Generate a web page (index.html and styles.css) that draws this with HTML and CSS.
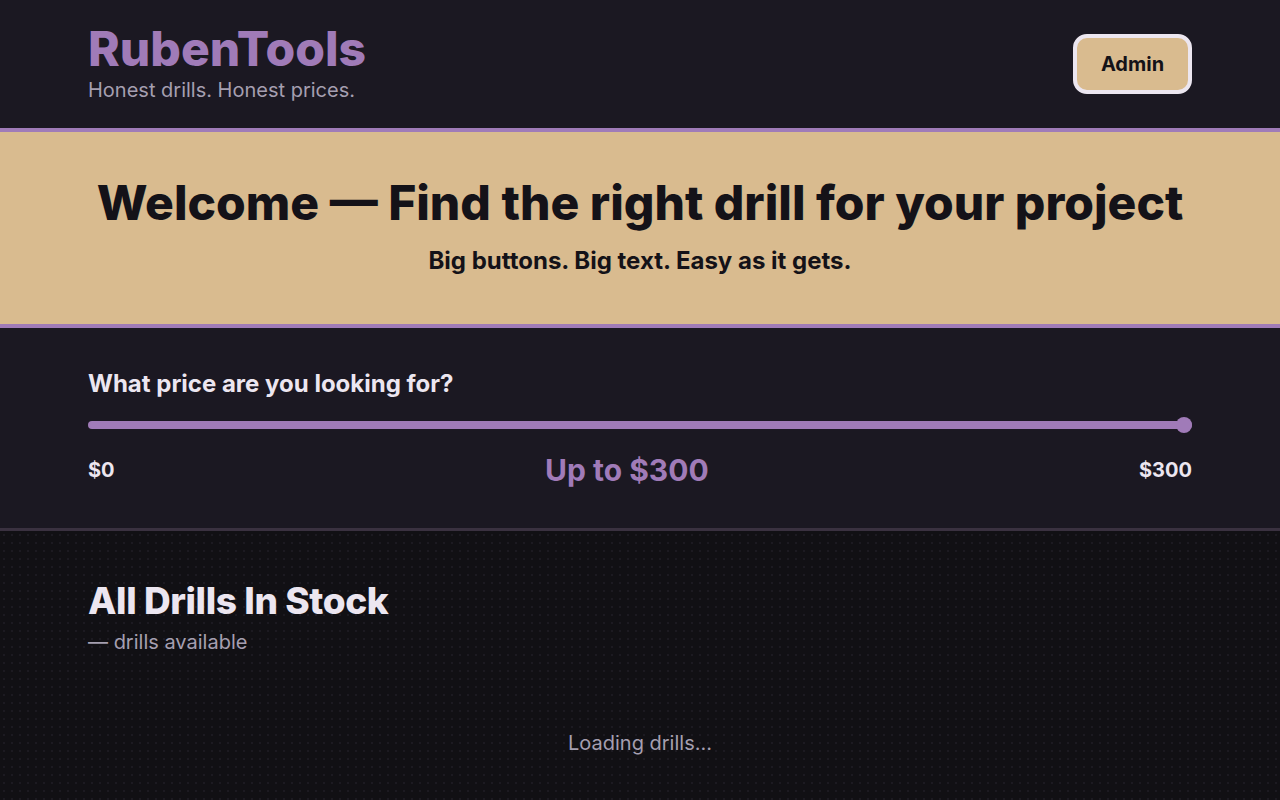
FILE: index.html
```html
<!DOCTYPE html>
<html lang="en">
<head>
    <meta charset="UTF-8">
    <meta name="viewport" content="width=device-width, initial-scale=1.0">
    <title>RubenTools</title>
    <link rel="stylesheet" href="styles.css">
</head>
<body>
    <header class="site-header">
        <div class="container header-inner">
            <div class="brand">
                <h1 class="brand-name">RubenTools</h1>
                <p class="brand-tagline">Honest drills. Honest prices.</p>
            </div>
            <button class="admin-btn">Admin</button>
        </div>
    </header>

    <section class="hero">
        <div class="container">
            <h2 class="hero-title">Welcome — Find the right drill for your project</h2>
            <p class="hero-sub">Big buttons. Big text. Easy as it gets.</p>
        </div>
    </section>

    <section class="price-filter">
        <div class="container">
            <label class="price-label" for="price">What price are you looking for?</label>
            <input type="range" id="price" class="price-range" min="0" max="300" value="300">
            <div class="price-row">
                <span class="price-end">$0</span>
                <span class="price-current">Up to $300</span>
                <span class="price-end">$300</span>
            </div>
        </div>
    </section>

    <main class="drills">
        <div class="container">
            <h2 class="drills-title">All Drills In Stock</h2>
            <p class="drills-count">— drills available</p>
            <p class="drills-loading">Loading drills...</p>
        </div>
    </main>
</body>
</html>
```

FILE: styles.css
```css
* {
    box-sizing: border-box;
}
html, body {
    margin: 0;
    padding: 0;
}
body {
    font-family: Inter, "Noto Sans", sans-serif;
    background-color: #111014;
    color: #ece6f0;
    min-height: 800px;
}
.container {
    max-width: 1104px;
    margin: 0 auto;
}

/* header */
.site-header {
    background-color: #1b1822;
    border-bottom: 4px solid #a07bb8;
}
.header-inner {
    display: flex;
    justify-content: space-between;
    align-items: center;
    height: 128px;
}
.brand {
    margin-top: -3px;
}
.brand-name {
    margin: 0;
    font-size: 48px;
    font-weight: 800;
    line-height: 1.1;
    color: #a07bb8;
}
.brand-tagline {
    margin: 3px 0 0;
    font-size: 20px;
    color: #a59fb0;
}
.admin-btn {
    font-family: inherit;
    background-color: #d9bb8f;
    color: #141218;
    border: 4px solid #ece6f0;
    border-radius: 14px;
    width: 119px;
    height: 60px;
    font-size: 20px;
    font-weight: 700;
    cursor: pointer;
}

/* hero */
.hero {
    background-color: #d9bb8f;
    border-bottom: 4px solid #a07bb8;
    text-align: center;
    color: #141218;
    height: 196px;
    padding-top: 42px;
}
.hero-title {
    margin: 0;
    font-size: 48px;
    font-weight: 800;
    line-height: 1.2;
}
.hero-sub {
    margin: 14px 0 0;
    font-size: 24px;
    font-weight: 700;
}

/* price filter */
.price-filter {
    background-color: #1b1822;
    border-bottom: 3px solid #3a3140;
    height: 203px;
    padding-top: 41px;
}
.price-label {
    display: block;
    font-size: 24px;
    font-weight: 700;
    color: #ece6f0;
}
.price-range {
    -webkit-appearance: none;
    appearance: none;
    display: block;
    width: 100%;
    height: 8px;
    margin: 23px 0 0;
    background: #a07bb8;
    border-radius: 4px;
    outline: none;
}
.price-range::-webkit-slider-thumb {
    -webkit-appearance: none;
    appearance: none;
    width: 16px;
    height: 16px;
    border-radius: 50%;
    background: #a07bb8;
    cursor: pointer;
}
.price-row {
    display: flex;
    justify-content: space-between;
    align-items: center;
    margin-top: 23px;
}
.price-end {
    font-size: 20px;
    font-weight: 700;
    color: #ece6f0;
}
.price-current {
    font-size: 30px;
    font-weight: 700;
    color: #a07bb8;
}

/* drills list */
.drills {
    background-color: #111014;
    background-image: radial-gradient(circle, #1c1a21 1px, transparent 1.2px);
    background-size: 8px 8px;
    min-height: 269px;
    padding-top: 48px;
}
.drills-title {
    margin: 0;
    font-size: 37px;
    font-weight: 800;
    line-height: 1.2;
    color: #ece6f0;
    letter-spacing: -0.4px;
}
.drills-count {
    margin: 7px 0 0;
    font-size: 20px;
    color: #a59fb0;
}
.drills-loading {
    margin: 77px 0 0;
    text-align: center;
    font-size: 20px;
    color: #a59fb0;
}
```
